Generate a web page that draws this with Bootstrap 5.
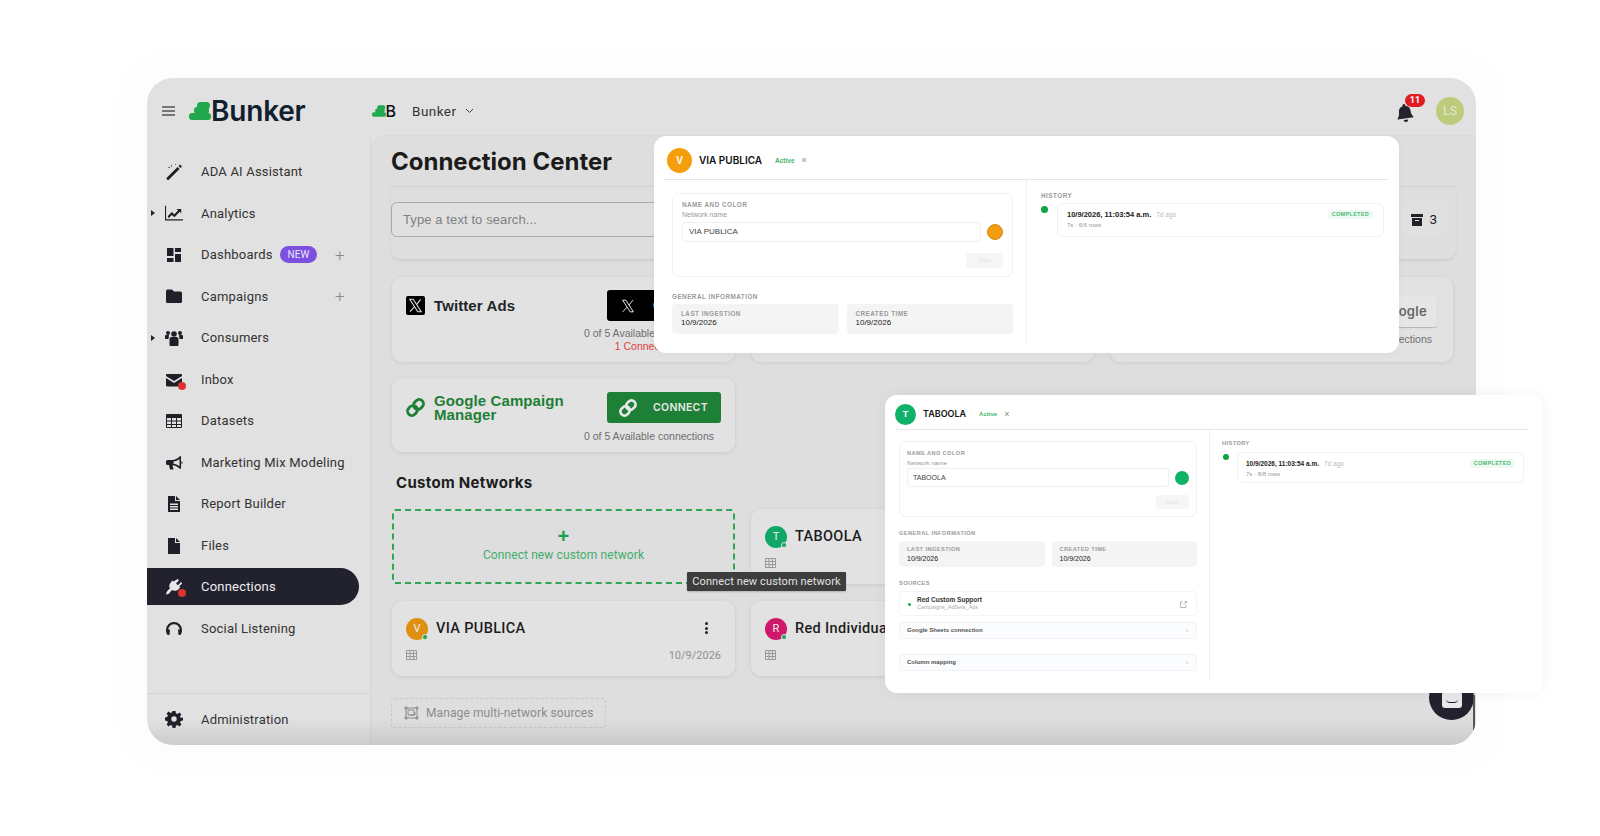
<!DOCTYPE html>
<html lang="en">
<head>
<meta charset="UTF-8">
<title>Bunker - Connection Center</title>
<link rel="stylesheet" href="https://cdn.jsdelivr.net/npm/bootstrap@5.3.0/dist/css/bootstrap.min.css">
<style>
  body { background: #fff; font-family: Roboto, sans-serif; width: 1600px; height: 836px; overflow: hidden; position: relative; }
  .halo { margin: 55px 97px 0 120px; padding: 23px 26px 24px 27px; height: 715px; background: #fdfdfd; border-radius: 44px; box-shadow: 0 0 12px rgba(0,0,0,.015); }
  .app { position: relative; width: 1329px; height: 667px; background: #e1e1e1; border-radius: 26px; overflow: hidden; display: flex; flex-direction: column; }
  .app::after { content: ""; position: absolute; left: 0; right: 0; bottom: 0; height: 26px; background: linear-gradient(rgba(120,120,120,0), rgba(120,120,120,.2)); pointer-events: none; }
  .topbar { height: 57px; flex: none; padding-top: 9px; }
  .burger { width: 13px; margin-left: 15px; margin-right: 14px; }
  .burger i { display: block; height: 1.5px; background: #777; margin: 2.5px 0; }
  .brand-word { font-family: Inter, sans-serif; font-weight: 600; font-size: 28px; color: #11202e; letter-spacing: -.2px; line-height: 1; }
  .org-logo { margin-left: 66px; font-family: Inter, sans-serif; font-size: 16px; font-weight: 500; color: #111; }
  .org-name { font-size: 13.5px; color: #333; margin-left: 16px; letter-spacing: .45px; }
  .bell-wrap { position: relative; width: 22px; height: 22px; margin: 7px 18px 0 0; }
  .bell-svg { display: block; transform: rotate(-8deg); }
  .bell-count { position: absolute; left: 9px; top: -10px; width: 20px; height: 13px; border-radius: 7px; background: #e01b22; color: #fff; font-size: 9px; font-weight: 700; line-height: 13px; text-align: center; }
  .user-dot { width: 28px; height: 28px; border-radius: 50%; background: #bdcc7c; color: #e3e7cc; font-size: 12.5px; line-height: 28px; text-align: center; margin-right: 12px; }
  .body-row { flex: 1; min-height: 0; }
  .side { width: 224px; flex: none; display: flex; flex-direction: column; padding-top: 16px; border-right: 1px solid #d8d8d8; }
  .side-link { position: relative; display: flex; align-items: center; height: 41.55px; padding-left: 54px; font-size: 13px; letter-spacing: .2px; color: #333; white-space: nowrap; }
  .side-ico { position: absolute; left: 18px; top: 50%; width: 18px; height: 18px; margin-top: -9px; fill: #1f1f27; }
  .side-arrow { position: absolute; left: 4px; top: 50%; margin-top: -3px; border-left: 4px solid #222; border-top: 3px solid transparent; border-bottom: 3px solid transparent; }
  .side-plus { position: absolute; left: 188px; top: 50%; transform: translateY(-50%); color: #888; font-size: 17px; font-weight: 300; line-height: 1; }
  .new-pill { margin-left: 7px; background: #7b4fe0; color: #ece6fb; font-size: 10px; letter-spacing: 0; line-height: 17px; height: 17px; padding: 0 8px; border-radius: 9px; }
  .side-link.on { width: 212px; height: 37px; margin: 2px 0 2.5px; background: #22222e; color: #eee; border-radius: 0 19px 19px 0; }
  .side-link.on .side-ico { fill: #e8e8e8; }
  .red-pip { position: absolute; left: 31px; top: 50%; margin-top: 2px; width: 8px; height: 8px; border-radius: 50%; background: #dd3330; }
  .side-foot { margin-top: auto; height: 52px; border-top: 1px solid #d3d3d3; display: flex; align-items: center; }
  .side-foot .side-link { width: 100%; margin-top: 0; }
  .main-pane { flex: 1; min-width: 0; background: #dedede; border-top-left-radius: 14px; padding: 0 20px; box-shadow: inset 1px 1px 2px rgba(0,0,0,.02); }
  .page-title { font-family: Inter, sans-serif; font-weight: 700; font-size: 24px; color: #1b1b1b; margin: 0; height: 52px; padding-top: 2px; line-height: 50px; border-bottom: 1px solid #d2d2d2; }
  .tool-card { height: 72px; padding-top: 15px; border-radius: 0 0 10px 10px; box-shadow: 0 2px 3px rgba(0,0,0,.07); display: flex; justify-content: space-between; }
  .search-box { width: 340px; height: 35px; border: 1px solid #aaa; border-radius: 6px; background: #e0e0e0; color: #808080; font-size: 13px; padding: 8px 11px; letter-spacing: .1px; font-family: "Liberation Sans", sans-serif; line-height: 18px; }
  .archive-count { display: flex; align-items: center; gap: 6px; height: 35px; margin-right: 9px; padding: 0 10px; border-radius: 8px; background: #e0e0e0; font-size: 13.5px; color: #222; }
  .net-grid { display: grid; grid-template-columns: 343px 343px 343px; column-gap: 16px; margin: 18px 0 0 1px; }
  .net-card { background: #e2e2e2; border-radius: 10px; box-shadow: 0 1px 4px rgba(0,0,0,.09); }
  .tw-card { height: 85px; padding: 13px 14px 0; }
  .gc-card { height: 74px; padding: 14px 14px 0; margin-top: 16px; }
  .net-ico { width: 19px; height: 19px; flex: none; }
  .chain-green { color: #1e7f36; }
  .chain-light { color: #e8e8e8; }
  .net-name { font-family: "Liberation Sans", sans-serif; font-weight: 700; font-size: 15px; letter-spacing: .1px; margin-left: 9px; line-height: 14px; }
  .green-name { color: #1e7f36; width: 145px; }
  .conn-btn { width: 114px; height: 31px; border-radius: 3px; margin-left: auto; color: #e8e8e8; font-family: Inter, sans-serif; font-size: 10.5px; font-weight: 600; letter-spacing: .3px; display: flex; align-items: center; gap: 16px; padding-left: 12px; flex: none; border: 0; }
  .btn-x { background: #000; }
  .btn-g { background: #1e7f36; }
  .btn-plain { margin-top: 6px; margin-right: 2px; background: #e6e6e6; color: #666; font-size: 13px; box-shadow: 0 1px 1px rgba(0,0,0,.2); justify-content: flex-end; padding-right: 10px; }
  .avail-note { font-family: "Liberation Sans", sans-serif; font-size: 10.5px; color: #6e6e6e; text-align: right; padding-right: 7px; line-height: 13px; margin-top: 6px; white-space: nowrap; }
  .gc-card .avail-note { margin-top: 7px; }
  .warn-note { color: #e0403a; margin-top: 0; }
  .custom-title { font-family: Inter, sans-serif; font-weight: 700; font-size: 15px; color: #1d1d1d; margin: 22px 0 17px 5px; line-height: 18px; letter-spacing: .3px; }
  .dash-card { height: 75px; border: 2px dashed #2fa653; border-radius: 3px; color: #43ad6b; text-align: center; font-size: 12px; letter-spacing: .1px; padding-top: 16px; line-height: 18px; box-shadow: none; background: transparent; }
  .dash-plus { color: #17a24d; font-size: 20px; font-weight: 700; line-height: 19px; display: block; font-family: "Liberation Sans", sans-serif; }
  .custom-card { height: 75px; padding: 17px 14px; position: relative; }
  .second-row { margin-top: 17px; }
  .av-disc { width: 22px; height: 22px; border-radius: 50%; color: #eee; font-size: 11px; line-height: 22px; text-align: center; position: relative; flex: none; }
  .av-disc::after { content: ""; position: absolute; right: 0; bottom: 0; width: 6px; height: 6px; border-radius: 50%; background: #13a84f; border: 1px solid #e2e2e2; }
  .disc-t { background: #10a868; }
  .disc-v { background: #e09010; }
  .disc-r { background: #d0186a; }
  .custom-name { font-size: 14.5px; font-weight: 500; color: #1d1d1d; margin-left: 8px; letter-spacing: .35px; white-space: nowrap; }
  .tiny-table { width: 11px; height: 10px; fill: none; stroke: #999; stroke-width: 1; display: block; margin-top: 10px; }
  .card-date { position: absolute; right: 14px; bottom: 12px; font-size: 11px; color: #909090; }
  .kebab { position: absolute; left: 313px; top: 21px; width: 3px; }
  .kebab i { display: block; width: 3px; height: 3px; border-radius: 50%; background: #222; margin-bottom: 1.5px; }
  .multi-box { width: 215px; height: 30px; margin: 22px 0 0; border: 1px dashed #c8c8c8; border-radius: 4px; color: #8c8c8c; font-size: 12px; letter-spacing: .1px; display: flex; align-items: center; gap: 7px; padding-left: 12px; white-space: nowrap; }
  .float-tip { position: absolute; left: 540px; top: 494px; width: 159px; height: 19px; background: #3d3d3d; border-radius: 1px; color: #e2e2e2; font-size: 11px; letter-spacing: .12px; line-height: 19px; text-align: center; z-index: 2; box-shadow: 0 1px 2px rgba(0,0,0,.2); white-space: nowrap; }
  .chat-bubble { position: absolute; left: 1282px; top: 597px; width: 45px; height: 45px; border-radius: 50%; background: #22222e; z-index: 2; }
  .chat-bubble i { position: absolute; left: 13px; top: 0; width: 20px; height: 33px; background: #e8e8e8; border-radius: 0 0 3px 3px; }
  .chat-bubble b { position: absolute; left: 17px; top: 24px; width: 12px; height: 4px; border-bottom: 1.5px solid #22222e; border-radius: 0 0 8px 8px; }
  .edge-line { position: absolute; right: 1px; bottom: 0; width: 2px; height: 50px; background: #555; z-index: 2; }

  .float-win { position: absolute; background: #fff; z-index: 3; font-family: "Liberation Sans", sans-serif; color: #111; display: flex; flex-direction: column; }
  .win-a { left: 654px; top: 136px; width: 745px; height: 217px; border-radius: 12px; padding: 0 11px 0 9px; box-shadow: 0 2px 10px rgba(0,0,0,.03); }
  .win-b { left: 885px; top: 395px; width: 658px; height: 298px; border-radius: 12px; padding: 0 14px 0 10px; box-shadow: 0 0 14px rgba(0,0,0,.05); }
  .win-head { flex: none; display: flex; align-items: center; border-bottom: 1px solid #e6e6e6; }
  .win-a .win-head { height: 44px; padding: 6px 0 0 4px; }
  .win-b .win-head { height: 35px; padding: 4px 0 0 0; }
  .win-av { border-radius: 50%; color: #fff; font-weight: 700; text-align: center; flex: none; }
  .av-orange { background: #f59e0b; }
  .av-green { background: #10b268; }
  .win-a .win-av { width: 25px; height: 25px; line-height: 25px; font-size: 10px; }
  .win-b .win-av { width: 21px; height: 21px; line-height: 21px; font-size: 9px; }
  .win-title { font-family: Inter, sans-serif; font-weight: 600; }
  .win-a .win-title { font-size: 10px; margin-left: 7px; }
  .win-b .win-title { font-size: 9px; margin-left: 7px; }
  .win-active { color: #45b36b; font-weight: 700; margin-left: 13px; }
  .win-a .win-active { font-size: 6.5px; }
  .win-b .win-active { font-size: 6px; }
  .win-x { color: #888; font-size: 9px; margin-left: 7px; line-height: 1; }
  .win-body { flex: 1; min-height: 0; display: flex; }
  .win-left { flex: none; border-right: 1px solid #efefef; }
  .win-a .win-left { width: 364px; padding: 13px 13px 0 9px; margin-bottom: 9px; }
  .win-b .win-left { width: 315px; padding: 11px 12px 0 4px; margin-bottom: 13px; }
  .win-right { flex: 1; min-width: 0; }
  .win-a .win-right { padding: 11px 4px 0 14px; }
  .win-b .win-right { padding: 9px 5px 0 12px; }
  .mini-label { font-weight: 700; color: #9a9a9a; line-height: 9px; }
  .win-a .mini-label { font-size: 6.3px; letter-spacing: .5px; }
  .win-b .mini-label { font-size: 5.7px; letter-spacing: .4px; }
  .name-box { border: 1px solid #f1f1f1; border-radius: 7px; }
  .win-a .name-box { height: 84px; padding: 6px 9px; }
  .win-b .name-box { height: 76px; padding: 7px 7px; }
  .field-cap { color: #999; line-height: 10px; }
  .win-a .field-cap { font-size: 7px; margin: 1px 0 2px; }
  .win-b .field-cap { font-size: 6.2px; }
  .field-row { display: flex; align-items: center; gap: 6px; }
  .name-field { flex: 1; border: 1px solid #efefef; border-radius: 3px; color: #444; padding-left: 6px; }
  .win-a .name-field { height: 20px; line-height: 18px; font-size: 8px; }
  .win-b .name-field { height: 19px; line-height: 17px; font-size: 7px; padding-left: 5px; }
  .color-dot { border-radius: 50%; flex: none; }
  .win-a .color-dot { width: 16px; height: 16px; border: 1px solid #d48a10; background: #f39c12; }
  .win-b .color-dot { width: 14px; height: 14px; background: #10b268; }
  .save-ghost { margin-left: auto; background: #f6f6f6; border-radius: 3px; color: #e4e4e4; font-size: 5.5px; text-align: center; }
  .win-a .save-ghost { width: 37px; height: 15px; line-height: 15px; margin-top: 11px; }
  .win-b .save-ghost { width: 33px; height: 14px; line-height: 14px; margin-top: 8px; }
  .info-grid { display: grid; grid-template-columns: 1fr 1fr; }
  .win-a .info-grid { column-gap: 8px; margin-top: 3px; }
  .win-b .info-grid { column-gap: 7px; margin-top: 3px; }
  .info-cell { background: #f4f4f4; border-radius: 4px; }
  .win-a .info-cell { height: 30px; padding: 5px 9px; }
  .win-b .info-cell { height: 26px; padding: 4px 8px; }
  .info-val { color: #222; line-height: 10px; }
  .win-a .info-val { font-size: 8px; }
  .win-b .info-val { font-size: 7px; }
  .win-a .gen-label { margin-top: 15px; }
  .win-b .gen-label { margin-top: 12px; }
  .src-label { margin-top: 12px; }
  .src-row { position: relative; height: 25px; margin-top: 3px; border: 1px solid #f4f4f4; border-radius: 4px; padding: 4px 0 0 17px; }
  .src-row::before { content: ""; position: absolute; left: 8px; top: 11px; width: 3px; height: 3px; border-radius: 50%; background: #13a84f; }
  .src-name { font-size: 6.5px; font-weight: 700; color: #333; line-height: 8px; }
  .src-sub { font-size: 5.5px; color: #aaa; line-height: 7px; }
  .src-open { position: absolute; right: 9px; top: 9px; fill: none; stroke: #aaa; stroke-width: .8; }
  .fold-row { display: flex; justify-content: space-between; align-items: center; height: 17px; border: 1px solid #f1f3f6; border-radius: 3px; background: #fbfcfd; padding: 0 8px 0 7px; font-size: 6px; font-weight: 700; color: #555; margin-top: 6px; }
  .fold-row + .fold-row { margin-top: 15px; }
  .fold-row span + span { color: #aaa; font-weight: 400; }
  .hist-row { display: flex; align-items: flex-start; }
  .hist-dot { flex: none; width: 7px; height: 7px; border-radius: 50%; background: #12a143; }
  .win-a .hist-row { margin-top: 3px; }
  .win-a .hist-dot { margin: 3px 9px 0 0; }
  .win-b .hist-row { margin-top: 4px; }
  .win-b .hist-dot { width: 6px; height: 6px; margin: 2px 8px 0 1px; }
  .hist-card { flex: 1; border: 1px solid #f1f1f1; border-radius: 6px; display: flex; justify-content: space-between; align-items: flex-start; }
  .win-a .hist-card { height: 34px; padding: 6px 10px 0 9px; }
  .win-b .hist-card { height: 31px; padding: 6px 8px 0; }
  .hist-when { font-weight: 700; color: #222; line-height: 10px; }
  .win-a .hist-when { font-size: 7.5px; }
  .win-b .hist-when { font-size: 6.5px; }
  .hist-ago { font-weight: 400; color: #bbb; margin-left: 5px; font-size: 6.5px; }
  .hist-sub { font-size: 6px; color: #999; line-height: 11px; }
  .done-pill { background: #eefaf1; color: #4dbb77; font-size: 5.5px; font-weight: 700; letter-spacing: .3px; border-radius: 4px; padding: 1px 4px; line-height: 7px; }
</style>
</head>
<body>
<svg width="0" height="0" class="position-absolute">
  <symbol id="blob" viewBox="0 0 22 18"><rect x="8" width="13" height="7" rx="3.500"/><rect x="5" y="5" width="15" height="7" rx="3"/><rect y="11" width="22" height="7" rx="3"/><path d="M5 12 1 14l4 1z"/></symbol>
  <symbol id="xmark" viewBox="0 0 20 20"><rect width="20" height="20" rx="2"/><path d="M4 3.500h3.600l8.400 13h-3.600z" fill="none" stroke="#e4e4e4" stroke-width="1.100"/><path d="M15.500 3.500 11 9M9 11.200l-4.800 5.300" stroke="#e4e4e4" stroke-width="1.100"/></symbol>
  <symbol id="chain" viewBox="0 0 20 20"><g transform="rotate(-45 10 10)" fill="none" stroke="currentColor" stroke-width="3"><rect x="0" y="5.500" width="11" height="9" rx="4.500"/><rect x="9" y="5.500" width="11" height="9" rx="4.500"/></g></symbol>
</svg>

<div class="halo">
  <div class="app">
    <div class="topbar d-flex align-items-center">
      <div class="burger"><i></i><i></i><i></i></div>
      <svg width="22" height="18" fill="#21a84f"><use href="#blob"/></svg>
      <span class="brand-word">Bunker</span>
      <div class="org-logo d-flex align-items-center"><svg width="14" height="12" fill="#21a84f"><use href="#blob"/></svg><span>B</span></div>
      <span class="org-name">Bunker</span>
      <svg class="ms-2" width="9" height="6" viewBox="0 0 9 6" fill="none" stroke="#444" stroke-width="1"><path d="M1 1l3.500 3.500L8 1"/></svg>
      <div class="ms-auto d-flex align-items-center">
        <div class="bell-wrap">
          <svg class="bell-svg" width="18" height="19" viewBox="0 0 19 21" fill="#23232c"><path d="M9.500 0a1.500 1.500 0 0 1 1.500 1.500v.7a6.500 6.500 0 0 1 5 6.300c0 5 2.500 5.800 2.500 7.500H.5C.5 14.300 3 13.500 3 8.500a6.500 6.500 0 0 1 5-6.300v-.7A1.500 1.500 0 0 1 9.500 0zM7 17.500h5a2.500 2.500 0 0 1-5 0z"/></svg>
          <span class="bell-count">11</span>
        </div>
        <div class="user-dot">LS</div>
      </div>
    </div>
    <div class="body-row d-flex">
      <div class="side">
        <div class="side-link"><svg class="side-ico" viewBox="0 0 18 18"><path d="M2 14.500 12.500 4l2 2L4 16.500a1.400 1.400 0 0 1-2-2zM13.500 3l1.500-1.500 2 2L15.500 5z"/><path d="M6 2h1v2H6zM3 4h2v1H3zM10 1h1v1h-1z" opacity=".6"/></svg>ADA AI Assistant</div>
        <div class="side-link"><span class="side-arrow"></span><svg class="side-ico" viewBox="0 0 20 18"><path d="M0 1h1.200v15H20v1.200H0z"/><path d="M3 12.500l4.500-4.500 3 2.500 4-4.500-1.800-1.500H18v5l-1.700-1.800-5.700 6-3-2.500-3.500 3.500z"/></svg>Analytics</div>
        <div class="side-link"><svg class="side-ico" viewBox="0 0 18 18"><path d="M2 2h6.500v8H2zM10 2h6v4h-6zM10 8h6v8h-6zM2 12h6.500v4H2z"/></svg>Dashboards<span class="new-pill">NEW</span><span class="side-plus">+</span></div>
        <div class="side-link"><svg class="side-ico" viewBox="0 0 18 18"><path d="M1 4a1.500 1.500 0 0 1 1.500-1.500h4.500L9 4.500h6.500A1.500 1.500 0 0 1 17 6v8.500a1.500 1.500 0 0 1-1.500 1.500h-13A1.500 1.500 0 0 1 1 14.500z"/></svg>Campaigns<span class="side-plus">+</span></div>
        <div class="side-link"><span class="side-arrow"></span><svg class="side-ico" viewBox="0 0 18 18"><circle cx="9" cy="5" r="2.800"/><circle cx="3" cy="4" r="2"/><circle cx="15" cy="4" r="2"/><path d="M4.500 10a2 2 0 0 1 2-2h5a2 2 0 0 1 2 2v6a1 1 0 0 1-1 1h-7a1 1 0 0 1-1-1zM0 7a1 1 0 0 1 1-1h3L3.500 10H0zM18 7a1 1 0 0 0-1-1h-3l.5 4H18z"/></svg>Consumers</div>
        <div class="side-link"><svg class="side-ico" viewBox="0 0 18 18"><path d="M1.500 3h15A1.500 1.500 0 0 1 17 4.500v.5l-8 5-8-5v-.5A1.500 1.500 0 0 1 1.500 3zM1 7l8 5 8-5v7a1.500 1.500 0 0 1-1.500 1.500h-13A1.500 1.500 0 0 1 1 14z"/></svg><span class="red-pip"></span>Inbox</div>
        <div class="side-link"><svg class="side-ico" viewBox="0 0 18 18" fill-rule="evenodd"><path d="M2 2h14a1 1 0 0 1 1 1v12a1 1 0 0 1-1 1H2a1 1 0 0 1-1-1V3a1 1 0 0 1 1-1zm0 4v2.500h4V6zm5 0v2.500h4V6zm5 0v2.500h4V6zM2 9.500V12h4V9.500zm5 0V12h4V9.500zm5 0V12h4V9.500zM2 13v2h4v-2zm5 0v2h4v-2zm5 0v2h4v-2z"/></svg>Datasets</div>
        <div class="side-link"><svg class="side-ico" viewBox="0 0 18 18" fill-rule="evenodd"><path d="M16 2v13l-1.500-.5c-2-2-4.500-3-7-3.300l1 4.300H5l-1-4.500H2.500A1.500 1.500 0 0 1 1 10V7.500A1.500 1.500 0 0 1 2.500 6H7c3 0 5.500-1.500 7.500-3.500zM14.500 5C12.500 6.500 10.500 7.300 8.500 7.500v2.300c2 .2 4 1 6 2.500z"/><path d="M16.500 7a2 2 0 0 1 0 3.500z"/></svg>Marketing Mix Modeling</div>
        <div class="side-link"><svg class="side-ico" viewBox="0 0 18 18" fill-rule="evenodd"><path d="M3 1h7v5h5v10.500a.5.500 0 0 1-.5.500h-11a.5.500 0 0 1-.5-.500zm2 7.500V10h8V8.500zm0 2.500v1.500h8V11zm0 2.500V15h8v-1.500zM11 1l4 4h-4z"/></svg>Report Builder</div>
        <div class="side-link"><svg class="side-ico" viewBox="0 0 18 18"><path d="M3 1h7v5h5v10.500a.5.500 0 0 1-.5.500h-11a.5.500 0 0 1-.5-.500zM11 1l4 4h-4z"/></svg>Files</div>
        <div class="side-link on"><svg class="side-ico" viewBox="0 0 18 18"><path d="M12.500 1l1.500 1.300-3 3.200 2 1.700 3-3.200 1.200 1.300-3 3.200 1 1-1.800 1.700c-2 2-4.700 2-6.500.8L4.500 15c-.8.700-1.500 1.300-3.500 1.500.3-1.500.5-2.500 1.300-3.500l2.700-2.700C3.800 8.500 4 6 6 4.200L7.500 2.500l1.200 1z"/></svg><span class="red-pip"></span>Connections</div>
        <div class="side-link"><svg class="side-ico" viewBox="0 0 18 18" fill-rule="evenodd"><path d="M9 2a8 8 0 0 1 8 8c0 2.500-.5 4-1.800 5H13.500l-.5-5.500h1.800A5.800 5.800 0 0 0 9 4.300 5.800 5.800 0 0 0 3.200 9.500H5L4.500 15H2.800C1.500 14 1 12.500 1 10a8 8 0 0 1 8-8z"/></svg>Social Listening</div>
        <div class="side-foot"><div class="side-link"><svg class="side-ico" viewBox="0 0 18 18" fill-rule="evenodd"><path d="M7.500 1h3l.4 2.200 1.600.7 1.900-1.300 2 2-1.300 1.900.7 1.600L18 7.500v3l-2.200.4-.7 1.600 1.300 1.900-2 2-1.900-1.300-1.600.7-.4 2.200h-3l-.4-2.200-1.600-.7-1.900 1.300-2-2 1.300-1.900-.7-1.600L0 10.500v-3l2.200-.4.700-1.600L1.600 3.600l2-2 1.900 1.300 1.600-.7zM9 6.300a2.700 2.700 0 1 0 0 5.400 2.700 2.700 0 0 0 0-5.400z"/></svg>Administration</div></div>
      </div>
      <div class="main-pane">
        <h1 class="page-title">Connection Center</h1>
        <div class="tool-card">
          <div class="search-box">Type a text to search...</div>
          <div class="archive-count"><svg width="12" height="12" viewBox="0 0 12 12" fill="#23232c"><path d="M0 0h12v3H0zM1 4h10v8H1z"/><path d="M4 6h4v1H4z" fill="#dedede"/></svg>3</div>
        </div>
        <div class="net-grid">
          <div class="net-card tw-card">
            <div class="d-flex align-items-center">
              <svg class="net-ico"><use href="#xmark"/></svg>
              <span class="net-name">Twitter Ads</span>
              <div class="conn-btn btn-x"><svg width="18" height="18"><rect x=".5" y=".5" width="17" height="17" rx="2" fill="none" stroke="#999"/><use href="#xmark" fill="#000"/></svg>CONNECT</div>
            </div>
            <div class="avail-note">0 of 5 Available connections</div>
            <div class="avail-note warn-note">1 Connection expired</div>
          </div>
          <div class="net-card tw-card"></div>
          <div class="net-card tw-card">
            <div class="d-flex"><div class="conn-btn btn-plain">Google</div></div>
            <div class="avail-note">0 of 5 Available connections</div>
          </div>
          <div class="net-card gc-card">
            <div class="d-flex align-items-center">
              <svg class="net-ico chain-green"><use href="#chain"/></svg>
              <span class="net-name green-name">Google Campaign Manager</span>
              <div class="conn-btn btn-g"><svg class="chain-light" width="18" height="18"><use href="#chain"/></svg>CONNECT</div>
            </div>
            <div class="avail-note">0 of 5 Available connections</div>
          </div>
        </div>
        <h2 class="custom-title">Custom Networks</h2>
        <div class="net-grid mt-0">
          <div class="net-card dash-card"><span class="dash-plus">+</span>Connect new custom network</div>
          <div class="net-card custom-card">
            <div class="d-flex align-items-center"><div class="av-disc disc-t">T</div><span class="custom-name">TABOOLA</span></div>
            <svg class="tiny-table" viewBox="0 0 11 10"><path d="M.5.500h10v9H.5zM.5 3.500h10M.5 6.500h10M4 .5v9M7.500.5v9"/></svg>
          </div>
          <div></div>
          <div class="net-card custom-card second-row">
            <div class="d-flex align-items-center"><div class="av-disc disc-v">V</div><span class="custom-name">VIA PUBLICA</span></div>
            <div class="kebab"><i></i><i></i><i></i></div>
            <svg class="tiny-table" viewBox="0 0 11 10"><path d="M.5.500h10v9H.5zM.5 3.500h10M.5 6.500h10M4 .5v9M7.500.5v9"/></svg>
            <span class="card-date">10/9/2026</span>
          </div>
          <div class="net-card custom-card second-row">
            <div class="d-flex align-items-center"><div class="av-disc disc-r">R</div><span class="custom-name">Red Individual</span></div>
            <svg class="tiny-table" viewBox="0 0 11 10"><path d="M.5.500h10v9H.5zM.5 3.500h10M.5 6.500h10M4 .5v9M7.500.5v9"/></svg>
          </div>
        </div>
        <div class="multi-box"><svg width="15" height="14" viewBox="0 0 15 14" fill="none" stroke="#8c8c8c"><path d="M2 2h11v10H2zM1 1h2v2H1zM12 1h2v2h-2zM1 11h2v2H1zM12 11h2v2h-2zM4 4h6v5H4zM6 9h5V6"/></svg>Manage multi-network sources</div>
      </div>
    </div>
    <div class="float-tip">Connect new custom network</div>
    <div class="chat-bubble"><i></i><b></b></div>
    <div class="edge-line"></div>
  </div>
</div>

<div class="float-win win-a">
  <div class="win-head">
    <div class="win-av av-orange">V</div>
    <span class="win-title">VIA PUBLICA</span>
    <span class="win-active">Active</span>
    <span class="win-x">&times;</span>
  </div>
  <div class="win-body">
    <div class="win-left">
      <div class="name-box">
        <div class="mini-label">NAME AND COLOR</div>
        <div class="field-cap">Network name</div>
        <div class="field-row"><div class="name-field">VIA PUBLICA</div><div class="color-dot"></div></div>
        <div class="save-ghost">Save</div>
      </div>
      <div class="mini-label gen-label">GENERAL INFORMATION</div>
      <div class="info-grid">
        <div class="info-cell"><div class="mini-label">LAST INGESTION</div><div class="info-val">10/9/2026</div></div>
        <div class="info-cell"><div class="mini-label">CREATED TIME</div><div class="info-val">10/9/2026</div></div>
      </div>
    </div>
    <div class="win-right">
      <div class="mini-label">HISTORY</div>
      <div class="hist-row">
        <div class="hist-dot"></div>
        <div class="hist-card">
          <div><div class="hist-when">10/9/2026, 11:03:54 a.m.<span class="hist-ago">7d ago</span></div><div class="hist-sub">7s · 6/6 rows</div></div>
          <span class="done-pill">COMPLETED</span>
        </div>
      </div>
    </div>
  </div>
</div>

<div class="float-win win-b">
  <div class="win-head">
    <div class="win-av av-green">T</div>
    <span class="win-title">TABOOLA</span>
    <span class="win-active">Active</span>
    <span class="win-x">&times;</span>
  </div>
  <div class="win-body">
    <div class="win-left">
      <div class="name-box">
        <div class="mini-label">NAME AND COLOR</div>
        <div class="field-cap">Network name</div>
        <div class="field-row"><div class="name-field">TABOOLA</div><div class="color-dot"></div></div>
        <div class="save-ghost">Save</div>
      </div>
      <div class="mini-label gen-label">GENERAL INFORMATION</div>
      <div class="info-grid">
        <div class="info-cell"><div class="mini-label">LAST INGESTION</div><div class="info-val">10/9/2026</div></div>
        <div class="info-cell"><div class="mini-label">CREATED TIME</div><div class="info-val">10/9/2026</div></div>
      </div>
      <div class="mini-label src-label">SOURCES</div>
      <div class="src-row"><div class="src-name">Red Custom Support</div><div class="src-sub">Campaigns_AdSets_Ads</div><svg class="src-open" width="7" height="7" viewBox="0 0 7 7"><path d="M3 1H.5v5.500H6V4M3.500 3.500 6.500.5M4.500.5h2v2"/></svg></div>
      <div class="fold-row"><span>Google Sheets connection</span><span>›</span></div>
      <div class="fold-row"><span>Column mapping</span><span>›</span></div>
    </div>
    <div class="win-right">
      <div class="mini-label">HISTORY</div>
      <div class="hist-row">
        <div class="hist-dot"></div>
        <div class="hist-card">
          <div><div class="hist-when">10/9/2026, 11:03:54 a.m.<span class="hist-ago">7d ago</span></div><div class="hist-sub">7s · 8/8 rows</div></div>
          <span class="done-pill">COMPLETED</span>
        </div>
      </div>
    </div>
  </div>
</div>

<script src="https://cdn.jsdelivr.net/npm/bootstrap@5.3.0/dist/js/bootstrap.bundle.min.js"></script>
</body>
</html>
